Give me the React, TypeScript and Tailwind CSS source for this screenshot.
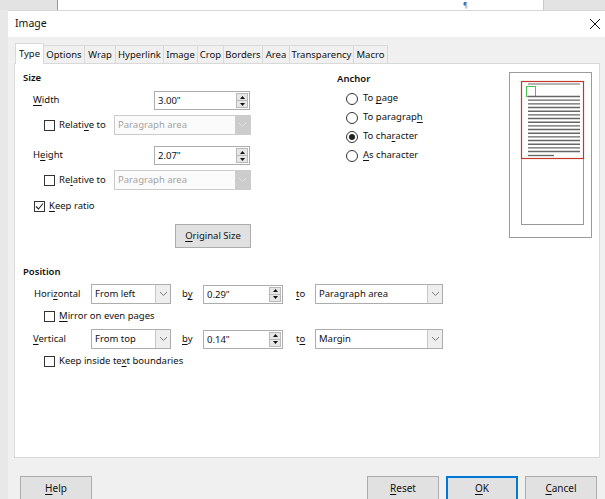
import type { ReactNode } from "react";

const tabs: { name: string; width: string }[] = [
  { name: "Type", width: "w-[29px]" },
  { name: "Options", width: "w-[41px]" },
  { name: "Wrap", width: "w-[31px]" },
  { name: "Hyperlink", width: "w-[48px]" },
  { name: "Image", width: "w-[34px]" },
  { name: "Crop", width: "w-[26px]" },
  { name: "Borders", width: "w-[39px]" },
  { name: "Area", width: "w-[27px]" },
  { name: "Transparency", width: "w-[64px]" },
  { name: "Macro", width: "w-[34px]" },
];

function M({ children }: { children: ReactNode }) {
  return <span className="underline underline-offset-[2px] decoration-[1px]">{children}</span>;
}

function Checkbox({ checked }: { checked?: boolean }) {
  return (
    <span className="grid h-[11px] w-[11px] shrink-0 place-items-center border border-[#333333] bg-white">
      {checked ? (
        <svg width="9" height="9" viewBox="0 0 9 9">
          <path d="M1 4.5 L3.5 7 L8 1.5" fill="none" stroke="#222222" strokeWidth="1.1" />
        </svg>
      ) : null}
    </span>
  );
}

function Radio({ checked }: { checked?: boolean }) {
  return (
    <span className="grid h-[12px] w-[12px] shrink-0 place-items-center rounded-full border border-[#333333] bg-white">
      {checked ? <span className="h-[6px] w-[6px] rounded-full bg-[#222222]" /> : null}
    </span>
  );
}

function Chevron({ color }: { color: string }) {
  return (
    <svg width="9" height="6" viewBox="0 0 9 6">
      <path d="M1 1 L4.5 4.5 L8 1" fill="none" stroke={color} strokeWidth="1" />
    </svg>
  );
}

function SpinBox({ value, width }: { value: string; width: string }) {
  return (
    <div className={`flex h-[19px] ${width} border border-[#adadad] bg-white`}>
      <span className="flex-1 pl-[3px] leading-[17px]">{value}</span>
      <div className="my-[1px] mr-[1px] flex w-[12px] flex-col">
        <span className="grid flex-1 place-items-center border border-[#b9b9b9] bg-[#e6e6e6]">
          <svg width="5" height="3" viewBox="0 0 5 3">
            <path d="M0 3 L2.5 0 L5 3 Z" fill="#111111" />
          </svg>
        </span>
        <span className="-mt-px grid flex-1 place-items-center border border-[#b9b9b9] bg-[#e6e6e6]">
          <svg width="5" height="3" viewBox="0 0 5 3">
            <path d="M0 0 L2.5 3 L5 0 Z" fill="#111111" />
          </svg>
        </span>
      </div>
    </div>
  );
}

function Select({ value, width, disabled }: { value: string; width: string; disabled?: boolean }) {
  return (
    <div
      className={`flex h-[20px] ${width} border ${disabled ? "border-[#cccccc] bg-[#fbfbfb] text-[#a3a3a3]" : "border-[#adadad] bg-white"}`}
    >
      <span className="flex-1 pl-[3px] leading-[18px]">{value}</span>
      <span
        className={`grid w-[15px] place-items-center ${disabled ? "bg-[#cccccc]" : "border-l border-[#c8c8c8] bg-[#eeeeee]"}`}
      >
        <Chevron color={disabled ? "#e2e2e2" : "#7a7a7a"} />
      </span>
    </div>
  );
}

function Button({ children, primary }: { children: ReactNode; primary?: boolean }) {
  return (
    <button
      type="button"
      className={`h-[25px] w-[72px] shrink-0 bg-[#e1e1e1] text-[10px] ${primary ? "border border-[#0078d7] shadow-[inset_0_0_0_1px_#0078d7]" : "border border-[#adadad]"}`}
    >
      {children}
    </button>
  );
}

function Preview() {
  const lines = Array.from({ length: 16 }, (_, i) => 24.5 + i * 3.67);
  return (
    <svg width="83" height="166" viewBox="0 0 83 166" className="block">
      <rect x="0.5" y="0.5" width="82" height="165" fill="#ffffff" stroke="#9c9c9c" />
      <rect x="12.5" y="9.5" width="62" height="143" fill="#ffffff" stroke="#9a9a9a" />
      <line x1="19" y1="12" x2="71" y2="12" stroke="#6b6b6b" strokeWidth="1.2" />
      <rect x="17.5" y="14.5" width="9" height="10" fill="none" stroke="#4cc24c" />
      {lines.map((y) => (
        <line key={y} x1="19" y1={y} x2="71" y2={y} stroke="#666666" strokeWidth="1.4" />
      ))}
      <line x1="19" y1="83.5" x2="45" y2="83.5" stroke="#666666" strokeWidth="1.4" />
      <rect x="12.5" y="9.5" width="62" height="77" fill="none" stroke="#c0392b" strokeWidth="1.2" />
    </svg>
  );
}

export default function App() {
  return (
    <div className="relative h-[499px] w-[605px] overflow-hidden bg-[#e8e8e8] font-['Noto_Sans',sans-serif] text-[9.5px] text-[#111111]">
      {/* document window behind the dialog */}
      <div className="flex h-[10px]">
        <div className="w-[58px] border-r border-[#9a9a9a] bg-[#e3e3e3]" />
        <div className="relative flex-1 bg-white">
          <span className="absolute left-[405px] top-[1px] text-[7px] leading-[8px] text-[#1d6fb8]">¶</span>
        </div>
        <div className="w-[62px] border-l border-[#c8c8c8] bg-[#e3e3e3]" />
      </div>

      <div className="ml-[8px] w-[598px] border-t border-[#d6d6d6]">
        <div className="flex h-[26px] items-center justify-between bg-white pl-[7px] pr-[5px]">
          <span className="text-[10.5px]">Image</span>
          <svg width="12" height="12" viewBox="0 0 12 12">
            <path d="M1 1 L11 11 M11 1 L1 11" stroke="#111111" strokeWidth="1" />
          </svg>
        </div>

        <div className="h-[462px] bg-[#f0f0f0] px-[6px] pt-[6px]">
          <div className="relative z-10 ml-px flex h-[21px] items-end">
            {tabs.map((tab, i) =>
              i === 0 ? (
                <div
                  key={tab.name}
                  className={`${tab.width} h-[21px] border-x border-t border-[#d9d9d9] bg-white pt-[3px] text-center`}
                >
                  {tab.name}
                </div>
              ) : (
                <div
                  key={tab.name}
                  className={`${tab.width} mb-px h-[18px] border-r border-t border-[#d9d9d9] bg-[#f0f0f0] pt-[2px] text-center`}
                >
                  {tab.name}
                </div>
              ),
            )}
          </div>

          <div className="-mt-px h-[395px] border border-[#d9d9d9] bg-white pl-[8px] pt-[6px]">
            <div className="flex">
              {/* size */}
              <div className="w-[314px]">
                <div className="h-[16px] font-semibold leading-[16px]">Size</div>
                <div className="mt-[5px] flex h-[19px] items-center">
                  <span className="w-[131px] pl-[10px]">
                    <M>W</M>idth
                  </span>
                  <SpinBox value={'3.00"'} width="w-[96px]" />
                </div>
                <div className="mt-[5px] flex h-[20px] items-center">
                  <span className="flex w-[91px] items-center gap-[4px] pl-[21px]">
                    <Checkbox />
                    <span>
                      Relati<M>v</M>e to
                    </span>
                  </span>
                  <Select value="Paragraph area" width="w-[137px]" disabled />
                </div>
                <div className="mt-[11px] flex h-[19px] items-center">
                  <span className="w-[131px] pl-[10px]">
                    H<M>e</M>ight
                  </span>
                  <SpinBox value={'2.07"'} width="w-[96px]" />
                </div>
                <div className="mt-[5px] flex h-[20px] items-center">
                  <span className="flex w-[91px] items-center gap-[4px] pl-[21px]">
                    <Checkbox />
                    <span>
                      Re<M>l</M>ative to
                    </span>
                  </span>
                  <Select value="Paragraph area" width="w-[137px]" disabled />
                </div>
                <div className="mt-[8px] flex h-[16px] items-center gap-[4px] pl-[11px]">
                  <Checkbox checked />
                  <span>
                    <M>K</M>eep ratio
                  </span>
                </div>
                <div className="mt-[10px] pl-[152px]">
                  <button
                    type="button"
                    className="h-[24px] w-[76px] border border-[#adadad] bg-[#e1e1e1] text-[9.5px]"
                  >
                    <M>O</M>riginal Size
                  </button>
                </div>
              </div>

              {/* anchor */}
              <div className="w-[172px] pt-px">
                <div className="h-[16px] font-semibold leading-[16px]">Anchor</div>
                <div className="mt-[2px] flex flex-col pl-[9px]">
                  {[
                    ["To ", "p", "age", false],
                    ["To paragrap", "h", "", false],
                    ["To cha", "r", "acter", true],
                    ["", "A", "s character", false],
                  ].map(([a, m, b, on]) => (
                    <div key={`${a}${m}${b}`} className="flex h-[19px] items-center gap-[5px]">
                      <Radio checked={on as boolean} />
                      <span>
                        {a as string}
                        <M>{m as string}</M>
                        {b as string}
                      </span>
                    </div>
                  ))}
                </div>
              </div>

              <div className="pt-[2px]">
                <Preview />
              </div>
            </div>

            {/* position */}
            <div className="mt-[16px]">
              <div className="h-[16px] font-semibold leading-[16px]">Position</div>
              <div className="mt-[4px] flex h-[20px] items-center">
                <span className="w-[68px] pl-[11px]">
                  Hori<M>z</M>ontal
                </span>
                <Select value="From left" width="w-[80px]" />
                <span className="w-[32px] pl-[11px]">
                  b<M>y</M>
                </span>
                <SpinBox value={'0.29"'} width="w-[80px]" />
                <span className="w-[32px] pl-[13px]">
                  <M>t</M>o
                </span>
                <Select value="Paragraph area" width="w-[128px]" />
              </div>
              <div className="mt-[4px] flex h-[16px] items-center gap-[4px] pl-[21px]">
                <Checkbox />
                <span>
                  <M>M</M>irror on even pages
                </span>
              </div>
              <div className="mt-[5px] flex h-[20px] items-center">
                <span className="w-[68px] pl-[10px]">
                  <M>V</M>ertical
                </span>
                <Select value="From top" width="w-[80px]" />
                <span className="w-[32px] pl-[11px]">
                  <M>b</M>y
                </span>
                <SpinBox value={'0.14"'} width="w-[80px]" />
                <span className="w-[32px] pl-[13px]">
                  t<M>o</M>
                </span>
                <Select value="Margin" width="w-[128px]" />
              </div>
              <div className="mt-[4px] flex h-[16px] items-center gap-[4px] pl-[21px]">
                <Checkbox />
                <span>
                  Keep inside te<M>x</M>t boundaries
                </span>
              </div>
            </div>
          </div>

          <div className="mt-[18px] flex items-start pl-[6px] pr-[3px]">
            <Button>
              <M>H</M>elp
            </Button>
            <div className="flex-1" />
            <div className="flex gap-[7px]">
              <Button>
                <M>R</M>eset
              </Button>
              <Button primary>
                <M>O</M>K
              </Button>
              <Button>
                <M>C</M>ancel
              </Button>
            </div>
          </div>
        </div>
      </div>
    </div>
  );
}
